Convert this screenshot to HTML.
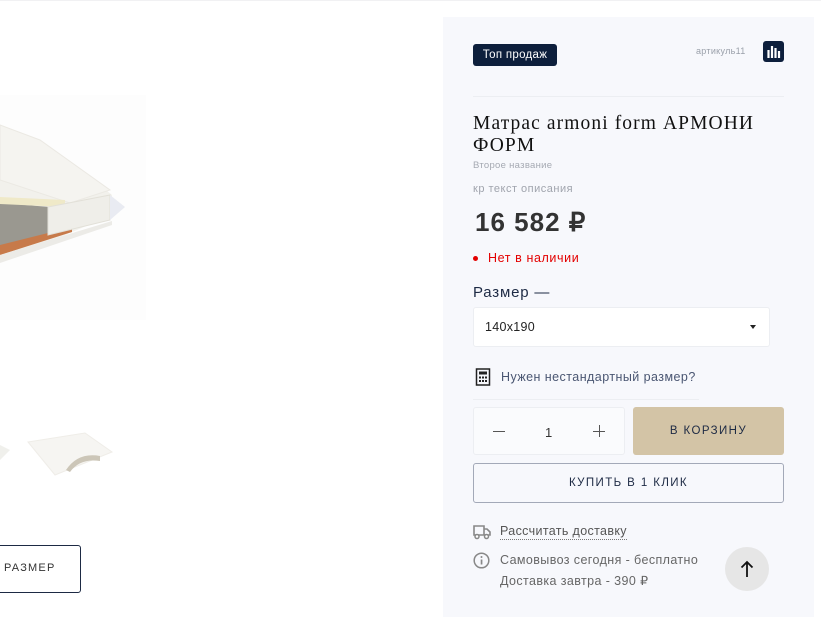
<!DOCTYPE html>
<html><head><meta charset="utf-8"><style>
*{margin:0;padding:0;box-sizing:border-box}
body{width:821px;height:613px;overflow:hidden;background:#fff;font-family:"Liberation Sans",sans-serif;position:relative}
.abs{position:absolute}
.panel{left:443px;top:17px;width:371px;height:600px;background:#f7f8fc}
.t{position:absolute;white-space:nowrap;letter-spacing:0.3px}
</style></head><body>
<div class="abs" style="left:0;top:0;width:821px;height:1px;background:#f1f1f3"></div>
<svg class="abs" style="left:0;top:95px" width="150" height="230">
<rect x="0" y="0" width="146" height="225" fill="#fdfdfd"/>
<path d="M0 30 L40 45 L100 90 L112 100 L112 120 L30 155 L0 165Z" fill="#f2f1ec"/>
<path d="M0 30 L40 45 L110 95 L70 108 L0 85Z" fill="#f5f4f0" stroke="#ebe9e3"/>
<path d="M0 108 L50 112 L50 140 L0 152Z" fill="#9a9890"/>
<path d="M0 102 L65 105 L65 112 L0 109Z" fill="#efe9c8"/>
<path d="M0 150 L72 132 L72 137 L0 160Z" fill="#c77a4a"/>
<path d="M48 112 L110 100 L110 125 L48 140Z" fill="#efeee9" stroke="#e2e0d8"/>
<path d="M110 100 L125 112 L110 125Z" fill="#e9ebf2"/>
<path d="M0 160 L112 126 L112 130 L0 168Z" fill="#ecebe7"/>
</svg>
<svg class="abs" style="left:0;top:430px" width="120" height="50">
<path d="M0 15 L10 20 L0 30Z" fill="#f0f0ec"/>
<path d="M28 12 L85 3 L112 22 L55 45Z" fill="#f6f5f2" stroke="#efede8"/>
<path d="M66 40 Q78 22 100 26 L100 31 Q80 28 70 42Z" fill="#ccc6b8"/>
</svg>
<div class="abs" style="left:-5px;top:545px;width:86px;height:48px;border:1px solid #1d2a44;border-radius:3px"></div>
<div class="t" style="left:4px;top:562px;font-size:11px;letter-spacing:1.2px;color:#333">РАЗМЕР</div>

<div class="abs panel"></div>
<div class="abs" style="left:473px;top:44px;width:84px;height:22px;background:#0d1f3c;border-radius:3px;color:#fff;font-size:11.5px;line-height:22px;text-align:center;letter-spacing:0.3px">Топ продаж</div>
<div class="t" style="left:696px;top:46px;font-size:9px;color:#9aa0aa">артикуль11</div>
<div class="abs" style="left:763px;top:41px;width:21px;height:21px;background:#0d1f3c;border-radius:3px"></div>
<svg class="abs" style="left:763px;top:41px" width="21" height="21"><g stroke="#fff" stroke-width="2.2"><path d="M5.5 9v8M9 5v12M12.5 7v10M16 10v7"/></g></svg>
<div class="abs" style="left:473px;top:96px;width:311px;height:1px;background:#eceef2"></div>
<div class="t" style="left:473px;top:113px;font-family:'Liberation Serif',serif;font-size:19.5px;line-height:22px;color:#111;white-space:normal;width:310px;letter-spacing:1.1px">Матрас armoni form АРМОНИ ФОРМ</div>
<div class="t" style="left:473px;top:160px;font-size:9.5px;color:#a5a9b2">Второе название</div>
<div class="t" style="left:473px;top:183px;font-size:11px;color:#a0a4ad;letter-spacing:0.5px">кр текст описания</div>
<div class="t" style="left:475px;top:207px;font-size:26px;font-weight:bold;color:#333;letter-spacing:1px">16 582 ₽</div>
<div class="abs" style="left:473px;top:256px;width:5px;height:5px;border-radius:50%;background:#e30000"></div>
<div class="t" style="left:488px;top:251px;font-size:12.5px;color:#e30000;letter-spacing:0.6px">Нет в наличии</div>
<div class="t" style="left:473px;top:284px;font-size:15px;color:#1d2a44;letter-spacing:0.8px">Размер —</div>
<div class="abs" style="left:473px;top:307px;width:297px;height:40px;background:#fff;border:1px solid #eceef2;border-radius:3px"></div>
<div class="t" style="left:485px;top:320px;font-size:12.5px;color:#222">140x190</div>
<div class="abs" style="left:750px;top:325px;border:3px solid transparent;border-top:4px solid #222"></div>
<svg class="abs" style="left:475px;top:368px" width="16" height="18"><rect x="1.5" y="1" width="13" height="16" fill="none" stroke="#222" stroke-width="1.5"/><rect x="4" y="3.5" width="8" height="3" fill="#222"/><g fill="#222"><rect x="4" y="8.5" width="2" height="2"/><rect x="7" y="8.5" width="2" height="2"/><rect x="10" y="8.5" width="2" height="2"/><rect x="4" y="12" width="2" height="2"/><rect x="7" y="12" width="2" height="2"/><rect x="10" y="12" width="2" height="2"/></g></svg>
<div class="t" style="left:501px;top:370px;font-size:12.5px;color:#4a5672;letter-spacing:0.45px">Нужен нестандартный размер?</div>
<div class="abs" style="left:473px;top:399px;width:226px;height:1px;background:#eceef2"></div>
<div class="abs" style="left:473px;top:407px;width:152px;height:48px;background:#fafbfd;border:1px solid #eceef2;border-radius:3px"></div>
<div class="abs" style="left:493px;top:431px;width:12px;height:1px;background:#555"></div>
<div class="t" style="left:545px;top:425px;font-size:13px;color:#333">1</div>
<div class="abs" style="left:593px;top:431px;width:12px;height:1px;background:#555"></div>
<div class="abs" style="left:598.5px;top:425px;width:1px;height:12px;background:#555"></div>
<div class="abs" style="left:633px;top:407px;width:151px;height:48px;background:#d3c4a6;border-radius:3px;text-align:center;line-height:48px;font-size:11.5px;letter-spacing:1.4px;color:#1d2a44">В КОРЗИНУ</div>
<div class="abs" style="left:473px;top:463px;width:311px;height:40px;border:1px solid #a3a9b8;border-radius:3px;text-align:center;line-height:38px;font-size:11.5px;letter-spacing:1.4px;color:#1d2a44">КУПИТЬ В 1 КЛИК</div>
<svg class="abs" style="left:473px;top:524px" width="18" height="16"><path d="M1 2h10v9H1z M11 5h3l3 3v3h-6z" fill="none" stroke="#888" stroke-width="1.6"/><circle cx="4" cy="12.5" r="2" fill="#fff" stroke="#888" stroke-width="1.5"/><circle cx="13.5" cy="12.5" r="2" fill="#fff" stroke="#888" stroke-width="1.5"/></svg>
<div class="t" style="left:500px;top:524px;font-size:12.5px;color:#555;border-bottom:1px dotted #777;line-height:15px;letter-spacing:0.35px">Рассчитать доставку</div>
<svg class="abs" style="left:473px;top:552px" width="18" height="18"><circle cx="8.5" cy="8.5" r="7.3" fill="none" stroke="#888" stroke-width="1.5"/><rect x="7.7" y="7.5" width="1.7" height="5" fill="#888"/><circle cx="8.5" cy="5" r="1" fill="#888"/></svg>
<div class="t" style="left:500px;top:553px;font-size:12.5px;color:#666;letter-spacing:0.4px">Самовывоз сегодня - бесплатно</div>
<div class="t" style="left:500px;top:573px;font-size:12.5px;color:#666;letter-spacing:0.4px">Доставка завтра - 390 ₽</div>
<div class="abs" style="left:725px;top:547px;width:44px;height:44px;border-radius:50%;background:#e6e6e6"></div>
<svg class="abs" style="left:725px;top:547px" width="44" height="44"><path d="M22 30V15M16.5 20.5L22 15l5.5 5.5" fill="none" stroke="#111" stroke-width="1.8"/></svg>
</body></html>
